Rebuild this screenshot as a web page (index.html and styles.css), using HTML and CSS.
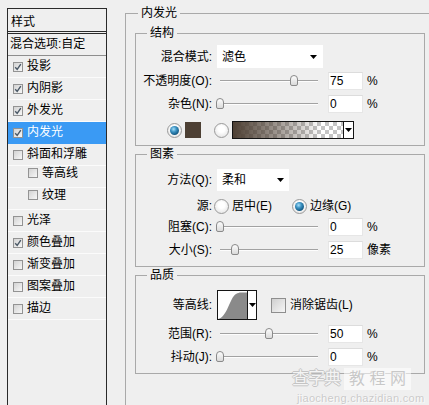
FILE: index.html
```html
<!DOCTYPE html>
<html lang="zh-CN">
<head>
<meta charset="utf-8">
<title>图层样式 - 内发光</title>
<link rel="stylesheet" href="styles.css">
</head>
<body>
<div class="app">
  <aside class="style-list">
    <div class="list-title">样式</div>
    <div class="list-blend">混合选项:自定</div>
    <ul class="effects">
      <li class="effect"><span class="cb on"><svg viewBox="0 0 8 8"><path d="M1.2 4.2 L3.2 6.4 L6.8 1.2"/></svg></span>投影</li>
      <li class="effect"><span class="cb on"><svg viewBox="0 0 8 8"><path d="M1.2 4.2 L3.2 6.4 L6.8 1.2"/></svg></span>内阴影</li>
      <li class="effect"><span class="cb on"><svg viewBox="0 0 8 8"><path d="M1.2 4.2 L3.2 6.4 L6.8 1.2"/></svg></span>外发光</li>
      <li class="effect selected"><span class="cb on"><svg viewBox="0 0 8 8"><path d="M1.2 4.2 L3.2 6.4 L6.8 1.2"/></svg></span>内发光</li>
      <li class="effect"><span class="cb"></span>斜面和浮雕</li>
      <li class="effect sub"><span class="cb"></span>等高线</li>
      <li class="effect sub"><span class="cb"></span>纹理</li>
      <li class="effect"><span class="cb"></span>光泽</li>
      <li class="effect"><span class="cb on"><svg viewBox="0 0 8 8"><path d="M1.2 4.2 L3.2 6.4 L6.8 1.2"/></svg></span>颜色叠加</li>
      <li class="effect"><span class="cb"></span>渐变叠加</li>
      <li class="effect"><span class="cb"></span>图案叠加</li>
      <li class="effect"><span class="cb"></span>描边</li>
    </ul>
  </aside>

  <main class="panel">
    <fieldset class="group outer">
      <legend>内发光</legend>

      <fieldset class="group sub sub-structure">
        <legend>结构</legend>
        <div class="row row-select">
          <span class="lbl">混合模式:</span>
          <span class="select select-wide">滤色<svg class="arrow" viewBox="0 0 7 4"><path d="M0 0 H7 L3.5 4 Z"/></svg></span>
        </div>
        <div class="row row-a">
          <span class="lbl">不透明度(O):</span>
          <span class="slider"><span class="track"><span class="thumb" style="left:75%"></span></span></span>
          <span class="num">75</span>
          <span class="unit">%</span>
        </div>
        <div class="row row-b">
          <span class="lbl">杂色(N):</span>
          <span class="slider"><span class="track"><span class="thumb" style="left:0%"></span></span></span>
          <span class="num">0</span>
          <span class="unit">%</span>
        </div>
        <div class="row row-color">
          <span class="radio on"></span>
          <span class="swatch"></span>
          <span class="radio radio-gap"></span>
          <span class="picker gradient-pick">
            <span class="grad"></span>
            <span class="drop"><svg class="arrow" viewBox="0 0 7 4"><path d="M0 0 H7 L3.5 4 Z"/></svg></span>
          </span>
        </div>
      </fieldset>

      <fieldset class="group sub sub-elements">
        <legend>图素</legend>
        <div class="row row-method">
          <span class="lbl">方法(Q):</span>
          <span class="select select-narrow">柔和<svg class="arrow" viewBox="0 0 7 4"><path d="M0 0 H7 L3.5 4 Z"/></svg></span>
        </div>
        <div class="row row-source">
          <span class="lbl">源:</span>
          <span class="opt opt-first"><span class="radio"></span>居中(E)</span>
          <span class="opt"><span class="radio on"></span>边缘(G)</span>
        </div>
        <div class="row row-c">
          <span class="lbl">阻塞(C):</span>
          <span class="slider"><span class="track"><span class="thumb" style="left:0%"></span></span></span>
          <span class="num">0</span>
          <span class="unit">%</span>
        </div>
        <div class="row row-b">
          <span class="lbl">大小(S):</span>
          <span class="slider"><span class="track"><span class="thumb" style="left:15%"></span></span></span>
          <span class="num">25</span>
          <span class="unit">像素</span>
        </div>
      </fieldset>

      <fieldset class="group sub sub-quality">
        <legend>品质</legend>
        <div class="row row-contour">
          <span class="lbl">等高线:</span>
          <span class="picker contour-pick">
            <span class="curve"><svg viewBox="0 0 29 28" preserveAspectRatio="none"><path d="M0 28 C 9 27, 12 6, 18 3 C 20 2, 21 1.5, 23 1.5 L29 1.5 L29 28 Z"/></svg></span>
            <span class="drop"><svg class="arrow" viewBox="0 0 7 4"><path d="M0 0 H7 L3.5 4 Z"/></svg></span>
          </span>
          <span class="check-opt"><span class="cb big"></span>消除锯齿(L)</span>
        </div>
        <div class="row row-b">
          <span class="lbl">范围(R):</span>
          <span class="slider"><span class="track"><span class="thumb" style="left:50%"></span></span></span>
          <span class="num">50</span>
          <span class="unit">%</span>
        </div>
        <div class="row row-b">
          <span class="lbl">抖动(J):</span>
          <span class="slider"><span class="track"><span class="thumb" style="left:0%"></span></span></span>
          <span class="num">0</span>
          <span class="unit">%</span>
        </div>
      </fieldset>
    </fieldset>
  </main>
</div>

<div class="watermark">
  <div class="wm-top"><span class="wm-a">查字典</span><span class="wm-b">教 程 网</span></div>
  <div class="wm-url">jiaocheng.chazidian.com</div>
</div>
</body>
</html>
```

FILE: styles.css
```css
* { box-sizing: border-box; }

html, body {
  margin: 0;
  padding: 0;
}

body {
  position: relative;
  width: 429px;
  height: 405px;
  overflow: hidden;
  background: #efefef;
  font-family: "Liberation Sans", "Noto Sans CJK SC", sans-serif;
  font-size: 12px;
  color: #000;
}

.app {
  display: flex;
  height: 405px;
  padding-left: 7px;
}

/* ---------- left style list ---------- */
.style-list {
  flex: none;
  margin-top: 8px;
  width: 100px;
  height: 397px;
  overflow: hidden;
  border: 1px solid #2a2a2a;
  border-bottom: none;
}

.list-title {
  height: 25px;
  padding: 4px 0 0 3px;
  line-height: 18px;
  border-bottom: 3px double #2a2a2a;
}

.list-blend {
  height: 22px;
  padding-left: 2px;
  line-height: 21px;
  border-bottom: 1px solid #8e8e8e;
}

.effects {
  list-style: none;
  margin: 0;
  padding: 0;
}

.effect {
  display: flex;
  align-items: center;
  height: 22px;
  padding-left: 5px;
  line-height: 21px;
  border-bottom: 1px solid #fbfbfb;
}

.effect.sub { padding-left: 20px; }

.effect.selected {
  background: #3a9af4;
  color: #fff;
  border-bottom-color: #3a9af4;
}

.cb {
  position: relative;
  flex: none;
  width: 10px;
  height: 10px;
  margin-right: 4px;
  border: 1px solid #939393;
  background: linear-gradient(135deg, #d3d3d3, #f7f7f7);
}

.cb svg {
  position: absolute;
  left: 0;
  top: 0;
  width: 8px;
  height: 8px;
}

.cb svg path {
  fill: none;
  stroke: #4a5866;
  stroke-width: 1.4;
}

.cb.big {
  width: 15px;
  height: 15px;
  margin-right: 4px;
  border-color: #8e8e8e;
  background: linear-gradient(135deg, #cfcfcf, #f6f6f6);
}

/* ---------- right settings ---------- */
.panel {
  flex: none;
  margin-left: 18px;
  padding-top: 5px;
}

fieldset.group {
  margin: 0;
  min-width: 0;
  border: 1px solid #a9a9a9;
}

.group > legend {
  height: 16px;
  padding: 0 3px;
  line-height: 16px;
}

.outer {
  width: 320px;
  padding: 4px 0 40px 9px;
}

.outer > legend { margin-left: 3px; }

.sub {
  width: 290px;
  padding: 0 0 7px 0;
}

.sub > legend { margin-left: 11px; }

.sub-structure { padding-bottom: 6px; }
.sub-elements { margin-top: 9px; }
.sub-quality { margin-top: 8px; }

.row {
  display: flex;
  align-items: center;
  height: 18px;
  line-height: 18px;
  white-space: nowrap;
}

.row-select { height: 23px; margin-top: 4px; }
.row-a { margin-top: 4px; }
.row-b { margin-top: 5px; }
.row-c { margin-top: 3px; }
.row-color { margin-top: 8px; padding-left: 31px; }
.row-method { height: 22px; margin-top: 7px; }
.row-source { margin-top: 6px; }
.row-contour { height: 30px; margin-top: 7px; }

.lbl {
  flex: none;
  width: 76px;
  text-align: right;
}

/* select box */
.select {
  flex: none;
  display: flex;
  align-items: center;
  justify-content: space-between;
  height: 100%;
  margin-left: 5px;
  padding: 0 6px 0 5px;
  background: #fff;
}

.select-wide { width: 106px; }
.select-narrow { width: 72px; padding-right: 5px; }

.arrow {
  display: block;
  width: 7px;
  height: 4px;
}

.arrow path { fill: #000; }

/* slider */
.slider {
  position: relative;
  flex: none;
  width: 106px;
  height: 18px;
  margin-left: 4px;
}

.track {
  position: absolute;
  left: 4px;
  right: 4px;
  top: 0;
  bottom: 0;
}

.track::before {
  content: "";
  position: absolute;
  left: 0;
  right: 0;
  top: 8px;
  border-top: 1px solid #a2a2a2;
  border-bottom: 1px solid #fdfdfd;
}

.thumb {
  position: absolute;
  top: 3px;
  width: 8px;
  height: 11px;
  transform: translateX(-50%);
  border: 1px solid #8a8a8a;
  border-radius: 4px 4px 2px 2px;
  background: linear-gradient(#fdfdfd, #dadada);
}

.num {
  flex: none;
  width: 35px;
  height: 18px;
  margin-left: 6px;
  padding-left: 1px;
  line-height: 16px;
  background: #fff;
  border: 1px solid #e6e6e6;
  border-top-color: #dcdcdc;
}

.unit { margin-left: 4px; }

/* radio buttons */
.radio {
  position: relative;
  flex: none;
  width: 15px;
  height: 15px;
  border-radius: 50%;
  border: 1px solid #9a9a9a;
  background: radial-gradient(circle at 50% 40%, #ffffff 30%, #dcdcdc 100%);
}

.radio.on::after {
  content: "";
  position: absolute;
  left: 2px;
  top: 2px;
  width: 9px;
  height: 9px;
  border-radius: 50%;
  background: radial-gradient(circle at 40% 35%, #a6e0fb 0, #3c92c2 35%, #135b86 70%, #0c3d5c 100%);
}

.radio-gap { margin-left: 13px; }

.swatch {
  flex: none;
  width: 16px;
  height: 16px;
  margin-left: 3px;
  background: #4d4034;
}

/* pickers (gradient / contour) */
.picker {
  flex: none;
  display: flex;
  border: 1px solid #141414;
  background: #fff;
}

.gradient-pick {
  height: 18px;
  margin-left: 3px;
}

.grad {
  width: 110px;
  height: 100%;
  background:
    linear-gradient(to right, rgba(78, 64, 52, 1) 0%, rgba(78, 64, 52, 0.55) 40%, rgba(78, 64, 52, 0) 80%),
    repeating-conic-gradient(#c4c4c4 0 25%, #ffffff 0 50%) 0 0 / 8px 8px;
}

.drop {
  display: flex;
  align-items: center;
  justify-content: center;
  width: 10px;
  border-left: 1px solid #141414;
  background: #fff;
}

.contour-pick {
  height: 30px;
  margin-left: 5px;
}

.curve {
  width: 29px;
  height: 28px;
  background: #fff;
}

.curve svg {
  display: block;
  width: 29px;
  height: 28px;
}

.curve path { fill: #8a8a8a; }

.contour-pick .drop {
  width: 9px;
  align-items: flex-start;
  padding-top: 12px;
}

.check-opt {
  display: flex;
  align-items: center;
  margin-left: 14px;
}

.opt {
  display: flex;
  align-items: center;
}

.opt .radio { margin-right: 3px; }

.opt-first {
  width: 78px;
  margin-left: 2px;
}

/* watermark overlay */
.watermark {
  position: absolute;
  left: 292px;
  top: 367px;
  width: 140px;
  color: #cdcdcd;
  text-shadow: 0 0 1px #fff, 1px 1px 0 #fafafa;
}

.wm-top {
  display: flex;
  align-items: center;
  height: 24px;
  font-size: 17px;
  line-height: 22px;
}

.wm-a {
  color: #f4f4f4;
  text-shadow: -1px 0 0 #c4c4c4, 1px 0 0 #c4c4c4, 0 -1px 0 #c4c4c4, 0 1px 0 #c4c4c4;
  letter-spacing: -1px;
}

.wm-b {
  margin-left: 4px;
  padding: 0 5px;
  background: rgba(255, 255, 255, 0.55);
  color: #c8c8c8;
  font-size: 16px;
}

.wm-url {
  margin-top: 1px;
  padding-left: 5px;
  font-size: 11px;
  line-height: 12px;
  letter-spacing: 0.3px;
  color: #c9c9c9;
}
```
